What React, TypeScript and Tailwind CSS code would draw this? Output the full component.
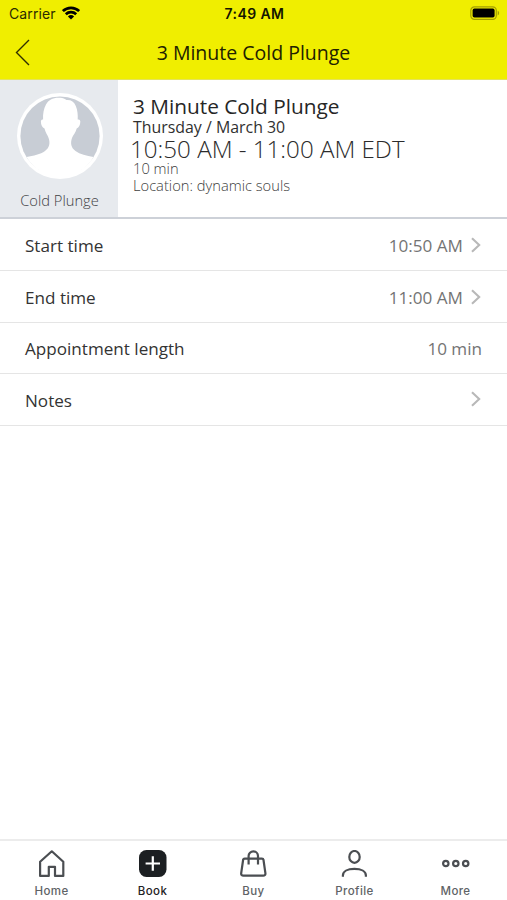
import type { ReactNode } from 'react'

interface Row {
  label: string
  value?: string
  link?: boolean
}

interface Tab {
  label: string
  icon: ReactNode
  active?: boolean
}

const rows: Row[] = [
  { label: 'Start time', value: '10:50 AM', link: true },
  { label: 'End time', value: '11:00 AM', link: true },
  { label: 'Appointment length', value: '10 min' },
  { label: 'Notes', link: true },
]

const tabs: Tab[] = [
  {
    label: 'Home',
    icon: <path d="M3.1 11.8 14.8 1.3l11.5 10.500v14.100h-8.300v-9.100h-6.200v9.100H3.100z" strokeLinejoin="round" />,
  },
  {
    label: 'Book',
    active: true,
    icon: (
      <>
        <rect x="1" y="0" width="27.500" height="27" rx="7.500" fill="#1c1f22" stroke="none" />
        <path d="M14.800 6.300v14.400M7.600 13.500h14.400" stroke="#fff" />
      </>
    ),
  },
  {
    label: 'Buy',
    icon: (
      <>
        <path d="M5.700 8.600h17.200c.9 0 1.500.5 1.600 1.400l1.900 13.200c.2 1.500-.7 2.500-2.200 2.500H4.400c-1.500 0-2.400-1-2.200-2.500L4.100 10c.1-.9.7-1.400 1.600-1.400z" />
        <path d="M9.600 14.400V6a4.700 4.700 0 0 1 9.400 0v8.400" />
      </>
    ),
  },
  {
    label: 'Profile',
    icon: (
      <>
        <ellipse cx="14.500" cy="6.900" rx="5.200" ry="5.900" />
        <path d="M2.900 26.800v-1.400c0-4 4.600-6.500 11.500-6.500s11.500 2.500 11.500 6.500v1.400" />
      </>
    ),
  },
  {
    label: 'More',
    icon: (
      <>
        <circle cx="4.800" cy="13.500" r="2.700" />
        <circle cx="14.800" cy="13.500" r="2.700" />
        <circle cx="24.700" cy="13.500" r="2.700" />
      </>
    ),
  },
]

function StatusBar() {
  return (
    <div className="grid h-7 grid-cols-3 items-center pl-[9px] pr-[7px] font-['Inter','Liberation_Sans',sans-serif] text-black">
      <div className="flex items-center gap-[6px]">
        <span className="text-[14px] leading-[18px] tracking-[0.1px] text-[#2b2b00]">Carrier</span>
        <svg className="-mt-[2px]" width="18" height="14" viewBox="0 0 18 14" fill="none" stroke="#000" strokeWidth="2.700">
          <path d="M.9 5.100a11.700 11.700 0 0 1 16.200 0M3.800 8.300a7.500 7.500 0 0 1 10.400 0" />
          <path d="M9 13.600 5.900 10.500a4.500 4.500 0 0 1 6.200 0z" fill="#000" stroke="none" />
        </svg>
      </div>
      <span className="text-center text-[14px] font-semibold leading-[18px] tracking-[0.4px] text-[#151500]">7:49 AM</span>
      <svg className="-mt-[2px] justify-self-end" width="30" height="14" viewBox="0 0 30 14" fill="none">
        <rect x=".8" y=".9" width="25.500" height="12.400" rx="3.600" stroke="#a3a000" strokeWidth="1.200" />
        <rect x="2.600" y="2.600" width="22" height="9" rx="1.800" fill="#000" />
        <path d="M27.700 4.800c1.900.7 1.900 3.900 0 4.600z" fill="#a3a000" />
      </svg>
    </div>
  )
}

function Avatar() {
  return (
    <svg width="86" height="86" viewBox="0 0 86 86">
      <circle cx="43" cy="43" r="43" fill="#fff" />
      <circle cx="43" cy="43" r="39.600" fill="#c8cdd5" />
      <path
        d="M9.500 64c7-1.300 14-2.700 18.500-6 4.800-3.500 5.200-8.500 3.600-13-1-3-3.200-5.500-4.100-9.500-2.200-.6-3.600-3.500-3.600-6.700 0-1.800.7-2.700 2.200-2.300C25.700 21 26.800 15.500 29 11.500 31.500 7 35.500 4.700 41.500 4.700c3.500 0 6 .6 8 2.400 4.500-.3 7.500 1.600 9.300 5.900 1.800 4.200 2.200 9 1.900 13.500 1.800-.4 2.700.5 2.600 2.300 0 3.200-1.400 6.100-3.600 6.700-.9 4-3.600 6.500-4.700 9.500-1.600 4.500-1.300 9.500 3.500 13 4.500 3.300 11 4.700 18 6C70 76 57 83.500 43 83.500S16.500 76 9.500 64z"
        fill="#fff"
      />
    </svg>
  )
}

function Chevron() {
  return (
    <svg className="-mt-[2px] mr-[1px]" width="10" height="16" viewBox="0 0 10 16" fill="none" stroke="#b8b8b8" strokeWidth="2.100">
      <path d="m1 1.200 7.200 6.800L1 14.800" />
    </svg>
  )
}

export default function App() {
  return (
    <div className="flex h-[900px] w-[507px] flex-col overflow-hidden bg-white font-['Open_Sans',sans-serif]">
      <header className="h-20 shrink-0 border-b border-[#e4e35a] bg-[#f0ee00]">
        <StatusBar />
        <div className="grid h-[49px] grid-cols-[40px_1fr_40px] items-center">
          <button className="pl-[15px]" aria-label="Back">
            <svg width="15" height="27" viewBox="0 0 15 27" fill="none" stroke="#302f00" strokeWidth="1.400">
              <path d="M14 1 1.500 13.500 14 26" />
            </svg>
          </button>
          <h1 className="text-center text-[19.500px] text-[#212100]">3 Minute Cold Plunge</h1>
        </div>
      </header>

      <section className="flex h-[139px] shrink-0 border-b-2 border-[#cdd1d8]">
        <div className="flex w-[118px] flex-col items-center bg-[#e7eaee] pl-[1px] pt-[13px]">
          <Avatar />
          <span className="mt-[11px] text-[14.700px] font-light leading-5 text-[#3f4245]">Cold Plunge</span>
        </div>
        <div className="flex flex-col pl-[15px] pt-[14px]">
          <h2 className="text-[20.800px] leading-6 text-[#262626]">3 Minute Cold Plunge</h2>
          <p className="text-[15.900px] leading-[18px] text-[#303030]">Thursday / March 30</p>
          <p className="-ml-[3px] text-[24.150px] font-light leading-[25px] text-[#2b2b2b]">10:50 AM - 11:00 AM EDT</p>
          <p className="mt-[2px] text-[14.700px] font-light leading-[10px] text-[#404040]">10 min</p>
          <p className="mt-[2px] text-[14.700px] font-light leading-5 text-[#404040]">Location: dynamic souls</p>
        </div>
      </section>

      <main className="flex-1 pt-[1px]">
        {rows.map(row => (
          <div
            key={row.label}
            className="flex h-[51.400px] items-center justify-between border-b border-[#e5e5e5] px-[25px] pt-[2px] text-[17.100px]"
          >
            <span className="text-[#333]">{row.label}</span>
            <div className="flex items-center gap-[8px] text-[#747474]">
              {row.value && <span>{row.value}</span>}
              {row.link && <Chevron />}
            </div>
          </div>
        ))}
      </main>

      <nav className="flex h-[61px] shrink-0 border-t-2 border-[#ececec] px-[1px] pt-[9px] font-['Inter','Liberation_Sans',sans-serif]">
        {tabs.map(tab => (
          <button key={tab.label} className="flex flex-1 flex-col items-center gap-[5px]">
            <svg width="29" height="28" viewBox="0 0 29 28" fill="none" stroke="#4b4e52" strokeWidth="2.200">
              {tab.icon}
            </svg>
            <span className={`text-[11.500px] font-medium leading-4 tracking-[0.4px] ${tab.active ? 'text-[#1f2225]' : 'text-[#606366]'}`}>
              {tab.label}
            </span>
          </button>
        ))}
      </nav>
    </div>
  )
}
